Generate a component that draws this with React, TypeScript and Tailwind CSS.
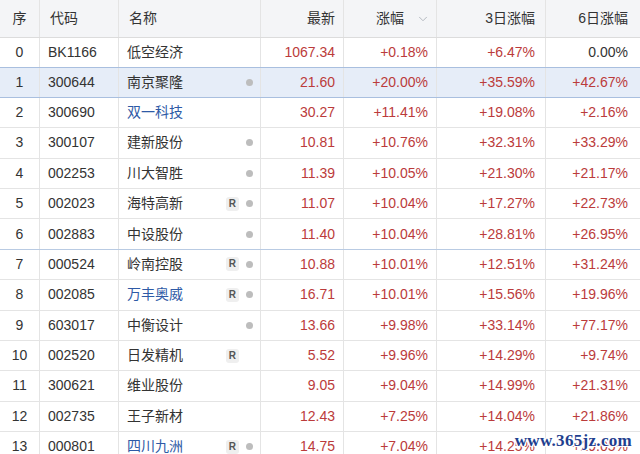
import { ChevronDown } from 'lucide-react';

type Row = {
  idx: number;
  code: string;
  name: string;
  link?: boolean;
  r?: boolean;
  dot?: boolean;
  price: string;
  chg: string;
  d3: string;
  d6: string;
};

const rows: Row[] = [
  { idx: 0, code: 'BK1166', name: '低空经济', price: '1067.34', chg: '+0.18%', d3: '+6.47%', d6: '0.00%' },
  { idx: 1, code: '300644', name: '南京聚隆', dot: true, price: '21.60', chg: '+20.00%', d3: '+35.59%', d6: '+42.67%' },
  { idx: 2, code: '300690', name: '双一科技', link: true, price: '30.27', chg: '+11.41%', d3: '+19.08%', d6: '+2.16%' },
  { idx: 3, code: '300107', name: '建新股份', dot: true, price: '10.81', chg: '+10.76%', d3: '+32.31%', d6: '+33.29%' },
  { idx: 4, code: '002253', name: '川大智胜', dot: true, price: '11.39', chg: '+10.05%', d3: '+21.30%', d6: '+21.17%' },
  { idx: 5, code: '002023', name: '海特高新', r: true, dot: true, price: '11.07', chg: '+10.04%', d3: '+17.27%', d6: '+22.73%' },
  { idx: 6, code: '002883', name: '中设股份', dot: true, price: '11.40', chg: '+10.04%', d3: '+28.81%', d6: '+26.95%' },
  { idx: 7, code: '000524', name: '岭南控股', r: true, dot: true, price: '10.88', chg: '+10.01%', d3: '+12.51%', d6: '+31.24%' },
  { idx: 8, code: '002085', name: '万丰奥威', link: true, r: true, dot: true, price: '16.71', chg: '+10.01%', d3: '+15.56%', d6: '+19.96%' },
  { idx: 9, code: '603017', name: '中衡设计', dot: true, price: '13.66', chg: '+9.98%', d3: '+33.14%', d6: '+77.17%' },
  { idx: 10, code: '002520', name: '日发精机', r: true, price: '5.52', chg: '+9.96%', d3: '+14.29%', d6: '+9.74%' },
  { idx: 11, code: '300621', name: '维业股份', price: '9.05', chg: '+9.04%', d3: '+14.99%', d6: '+21.31%' },
  { idx: 12, code: '002735', name: '王子新材', price: '12.43', chg: '+7.25%', d3: '+14.04%', d6: '+21.86%' },
  { idx: 13, code: '000801', name: '四川九洲', link: true, r: true, dot: true, price: '14.75', chg: '+7.04%', d3: '+14.25%', d6: '+29.05%' },
];

const grid = 'grid grid-cols-[40px_79px_142px_83px_93px_109px_1fr]';
const cell = 'border-r border-[#e4e4e4] flex items-center';

export default function App() {
  return (
    <div
      className="relative w-[640px] h-[454px] overflow-hidden bg-white text-[14px] text-[#333]"
      style={{ fontFamily: '"Liberation Sans", Arial, "Noto Sans CJK SC", sans-serif' }}
    >
      <div className={`${grid} h-[38px] bg-[#f4f5f7] border-b border-[#dcdcdc] text-[#333]`}>
        <div className={`${cell} justify-center`}>序</div>
        <div className={`${cell} pl-[10px]`}>代码</div>
        <div className={`${cell} pl-[10px]`}>名称</div>
        <div className={`${cell} justify-end pr-[8px]`}>最新</div>
        <div className={`${cell} justify-end pr-[6px] gap-[12px]`}>
          涨幅
          <ChevronDown className="w-[14px] h-[14px] text-[#aab0b8]" strokeWidth={1.5} />
        </div>
        <div className={`${cell} justify-end pr-[10px]`}>3日涨幅</div>
        <div className="flex items-center justify-end pr-[12px]">6日涨幅</div>
      </div>

      {rows.map((row) => (
        <TableRow key={row.idx} row={row} />
      ))}

      {/* 水印 */}
      <div
        className="absolute right-[8px] bottom-[1px] text-[17px] font-bold text-[#1f3f8f] tracking-[0.3px]"
        style={{
          fontFamily: '"Liberation Serif", "Times New Roman", serif',
          textShadow: '1px 1px 0 #fff, -1px -1px 0 #fff, 1px -1px 0 #fff, -1px 1px 0 #fff',
        }}
      >
        www.365jz.com
      </div>
    </div>
  );
}

function TableRow({ row }: { row: Row }) {
  const active = row.idx === 1;
  const border = active
    ? 'bg-[#e6edf8] border-y border-[#a9bfdf] -mt-px'
    : row.idx === 6
      ? 'border-b border-[#b9cbe3]'
      : 'border-b border-[#e4e4e4]';
  const red = row.d6 === '0.00%' ? 'text-[#333]' : 'text-[#bb3b3b]';

  return (
    <div className={`${grid} h-[30.4px] ${border}`}>
      <div className={`${cell} justify-center`}>{row.idx}</div>
      <div className={`${cell} pl-[8px]`}>{row.code}</div>
      <div className={`${cell} pl-[8px] pr-[7px]`}>
        <span className={row.link ? 'text-[#2e5aa6]' : ''}>{row.name}</span>
        <span className="ml-auto flex items-center gap-[7px]">
          {row.r && (
            <span className="text-[10px] font-bold text-[#555] bg-[#efefef] rounded-[3px] px-[3px] leading-[14px]">R</span>
          )}
          {row.dot ? (
            <span className="w-[7px] h-[7px] rounded-full bg-[#bdbdbd]" />
          ) : (
            <span className="w-[7px] h-[7px]" />
          )}
        </span>
      </div>
      <div className={`${cell} justify-end pr-[8px] text-[#bb3b3b]`}>{row.price}</div>
      <div className={`${cell} justify-end pr-[8px] text-[#bb3b3b]`}>{row.chg}</div>
      <div className={`${cell} justify-end pr-[10px] text-[#bb3b3b]`}>{row.d3}</div>
      <div className={`flex items-center justify-end pr-[12px] ${red}`}>{row.d6}</div>
    </div>
  );
}
